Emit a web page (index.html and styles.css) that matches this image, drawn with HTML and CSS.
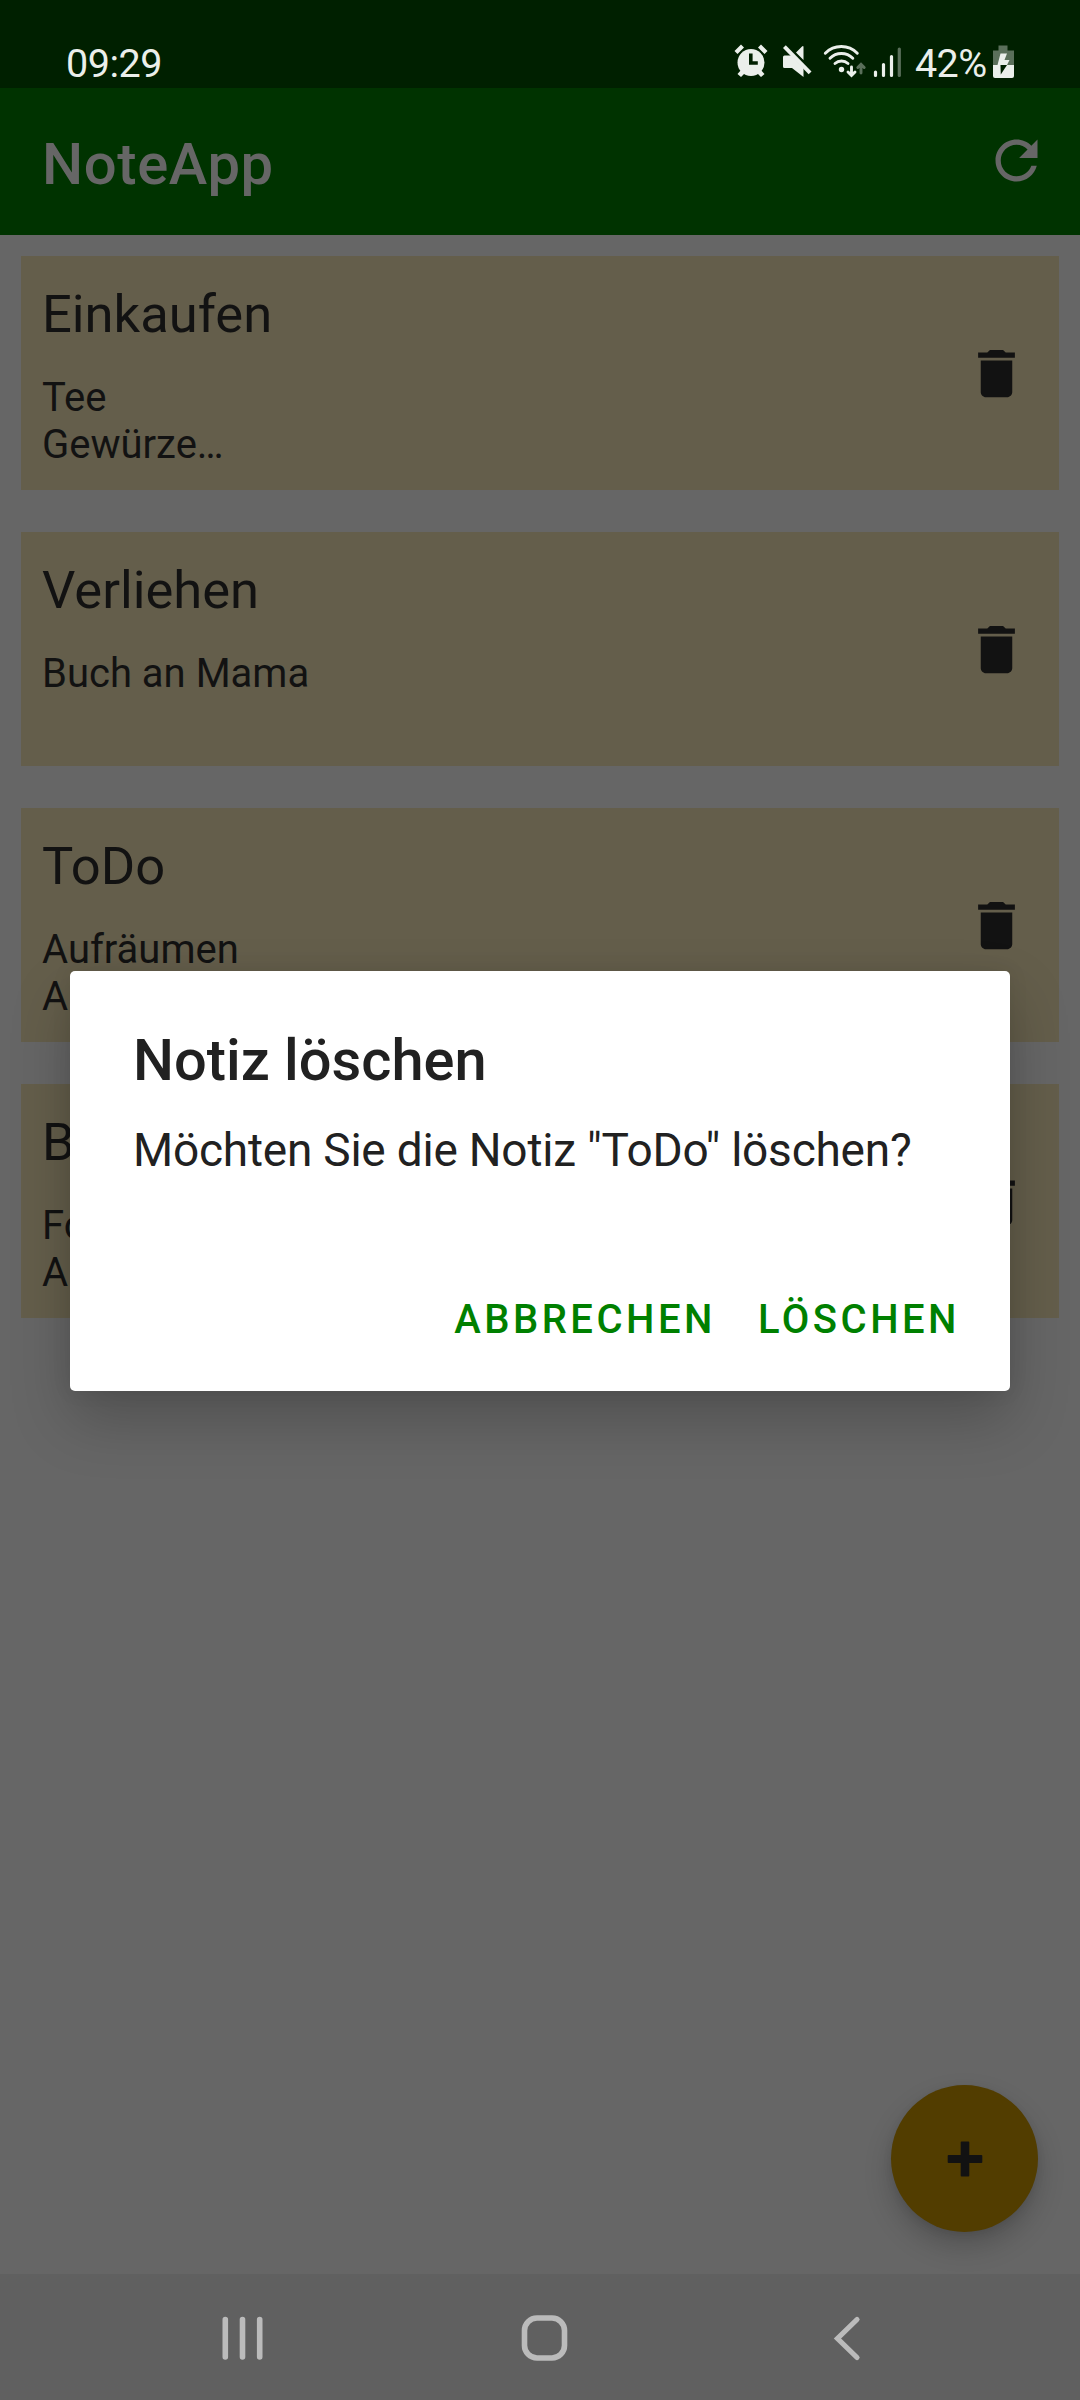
FILE: index.html
```html
<!DOCTYPE html>
<html lang="de">
<head>
<meta charset="utf-8">
<title>NoteApp</title>
<link rel="stylesheet" href="styles.css">
</head>
<body>
<svg class="defs" width="0" height="0">
  <symbol id="trash" viewBox="0 0 24 24"><path d="M6 19c0 1.1.9 2 2 2h8c1.1 0 2-.9 2-2V7H6v12zM19 4h-3.5l-1-1h-5l-1 1H5v2h14V4z"/></symbol>
</svg>
<div class="screen">
  <header class="status">
    <span class="time">09:29</span>
    <svg class="status-icons" viewBox="730 38 180 50" width="180" height="50">
      <g fill="#ebefeb">
        <circle cx="751" cy="62.500" r="13.500"/>
        <path d="M734.500 51l6.500-6.500 3 3-6.500 6.500zM767.500 51l-6.500-6.500-3 3 6.500 6.500zM737.500 74l4-4.500 4 3-4.500 4.500zM764.500 74l-4-4.500-4 3 4.500 4.500z"/>
        <path d="M783 57q0-1.500 1.500-1.500h7l12 12.500v9l-11.500-9h-7.500q-1.500 0-1.500-1.500zM796 52.500l6-6q1.500-1 1.500.5v13z"/>
        <path d="M783 48l2.800-2.800L811.500 71.500l-2.800 2.800z"/>
      </g>
      <path d="M750.800 53.500v9.500h7" fill="none" stroke="#002000" stroke-width="3.600"/>
      <g fill="none" stroke="#ebefeb" stroke-width="2.900" stroke-linecap="round">
        <path d="M825.300 53.200a22.500 22.500 0 0 1 32 0M830 58.300a16 16 0 0 1 22.800 0M835 63.500a9.500 9.500 0 0 1 13 0"/>
        <path d="M851.500 67v8M848 72l3.500 3.500 3.500-3.500"/>
        <path d="M861 73v-8M857.800 67.500l3.200-3.200 3.200 3.200" stroke="#5a6f5a"/>
      </g>
      <circle cx="841.500" cy="69.500" r="2.700" fill="#ebefeb"/>
      <path d="M875.500 72v3.500M883.500 64.500v11M891.500 56.500v19" stroke="#ebefeb" stroke-width="3.200" stroke-linecap="round"/>
      <path d="M899.300 49v26.500" stroke="#5a6f5a" stroke-width="3.200" stroke-linecap="round"/>
    </svg>
    <span class="percent">42%</span>
    <svg class="battery" viewBox="992 44 24 36" width="24" height="36">
      <path d="M998.500 45.500h9v5h6.500v14.500h-21v-14.500h5.500z" fill="#5a6f5a"/>
      <path d="M993 65h21v11q0 2-2 2h-17q-2 0-2-2z" fill="#ebefeb"/>
      <path d="M1000.500 53.500h6.500l-2.500 6.500h5l-2.500 5h-9.500z" fill="#ebefeb"/>
      <path d="M1000.500 65h6.500l-6.200 9.500z" fill="#002000"/>
    </svg>
  </header>
  <div class="appbar">
    <h1 class="app-title">NoteApp</h1>
    <svg class="refresh" viewBox="0 0 24 24"><path d="M17.650 6.350C16.200 4.900 14.210 4 12 4c-4.420 0-7.990 3.580-7.990 8s3.570 8 7.990 8c3.730 0 6.840-2.550 7.730-6h-2.080c-.82 2.330-3.040 4-5.650 4-3.310 0-6-2.690-6-6s2.690-6 6-6c1.660 0 3.140.69 4.220 1.780L13 11h7V4l-2.350 2.350z"/></svg>
  </div>
  <main class="notes">
    <article class="note"><div><h2 class="note-title">Einkaufen</h2><p class="note-text">Tee<br>Gewürze…</p></div><svg class="trash"><use href="#trash"/></svg></article>
    <article class="note"><div><h2 class="note-title">Verliehen</h2><p class="note-text">Buch an Mama</p></div><svg class="trash"><use href="#trash"/></svg></article>
    <article class="note"><div><h2 class="note-title">ToDo</h2><p class="note-text">Aufräumen<br>A</p></div><svg class="trash"><use href="#trash"/></svg></article>
    <article class="note"><div><h2 class="note-title">B</h2><p class="note-text">Fo<br>A</p></div><svg class="trash"><use href="#trash"/></svg></article>
  </main>
  <nav class="navbar">
    <svg viewBox="0 2274 1080 126" width="1080" height="126" fill="none" stroke="#bbb" stroke-linecap="round">
      <path d="M225.300 2319.500v37.500M242.500 2319.500v37.500M259.700 2319.500v37.500" stroke-width="5.600"/>
      <rect x="524.500" y="2318" width="40" height="40" rx="12.500" stroke-width="5.600"/>
      <path d="M857 2319.500L837.500 2338.500 857 2357.500" stroke-width="5.200" stroke-linejoin="miter"/>
    </svg>
  </nav>
  <div class="fab"><svg viewBox="0 0 36 36" width="36" height="36"><path d="M14.500 0.500h7q.8 0 .8 1v12.500h12.200q.8 0 .8 1v6q0 1-.8 1H22.300v12.500q0 1-.8 1h-7q-.8 0-.8-1V22H1.500q-.8 0-.8-1v-6q0-1 .8-1h12.200V1.500q0-1 .8-1z"/></svg></div>
  <section class="dialog">
    <h2 class="dialog-title">Notiz löschen</h2>
    <p class="dialog-text">Möchten Sie die Notiz "ToDo" löschen?</p>
    <div class="actions"><span>ABBRECHEN</span><span>LÖSCHEN</span></div>
  </section>
</div>
</body>
</html>
```
FILE: styles.css
```css
* { box-sizing: border-box; margin: 0; padding: 0; }
body { font-family: Roboto, sans-serif; background: #666; }
svg { display: block; flex: none; }
h1, h2 { font-weight: 500; }
.defs { position: absolute; }
.screen { position: relative; width: 1080px; height: 2400px; overflow: hidden; display: flex; flex-direction: column; background: #666; color: #121212; }
.status { height: 88px; background: #002000; color: #ebefeb; display: flex; padding: 38px 64px 0 66px; font-size: 39.5px; line-height: 52px; letter-spacing: -0.5px; }
.time { width: 664px; }
.percent { margin-left: 5px; width: 77px; letter-spacing: -0.6px; }
.battery { margin-top: 6px; }
.appbar { height: 147px; background: #003300; display: flex; align-items: center; justify-content: space-between; padding: 0 32px 0 42px; }
.app-title { font-size: 58px; line-height: 68px; letter-spacing: 0.6px; color: #666; padding-top: 4px; }
.refresh { width: 63px; height: 63px; fill: #666; margin-top: -2px; }
.notes { flex: 1; padding: 21px; display: flex; flex-direction: column; gap: 42px; }
.note { height: 234px; background: #645e4b; padding: 0 31px 0 21px; display: flex; justify-content: space-between; align-items: center; }
.note > div { align-self: flex-start; padding-top: 28px; }
.note-title { font-size: 52.5px; font-weight: 400; line-height: 61px; }
.note-text { font-size: 40px; line-height: 47.4px; margin-top: 29px; }
.trash { width: 63px; height: 63px; fill: #121212; }
.navbar { height: 126px; background: #606060; }
.fab { position: absolute; left: 891px; top: 2085px; width: 147px; height: 147px; border-radius: 50%; background: #523d00; fill: #121212; display: flex; align-items: center; justify-content: center; box-shadow: 0 14px 28px rgba(0,0,0,.2), 0 3px 8px rgba(0,0,0,.08); }
.dialog { position: absolute; left: 70px; top: 971px; width: 940px; height: 420px; border-radius: 5px; background: #fff; color: #212121; padding: 55px 50px 0 63px; box-shadow: 0 28px 60px rgba(0,0,0,.22), 0 0 20px rgba(0,0,0,.08); display: flex; flex-direction: column; }
.dialog-title { font-size: 57.75px; line-height: 68px; }
.dialog-text { font-size: 46px; line-height: 54px; letter-spacing: -0.22px; margin-top: 29px; }
.actions { display: flex; justify-content: flex-end; gap: 42px; margin-top: 119px; color: #008000; font-weight: 500; font-size: 40px; line-height: 48px; letter-spacing: 3.5px; }
```
